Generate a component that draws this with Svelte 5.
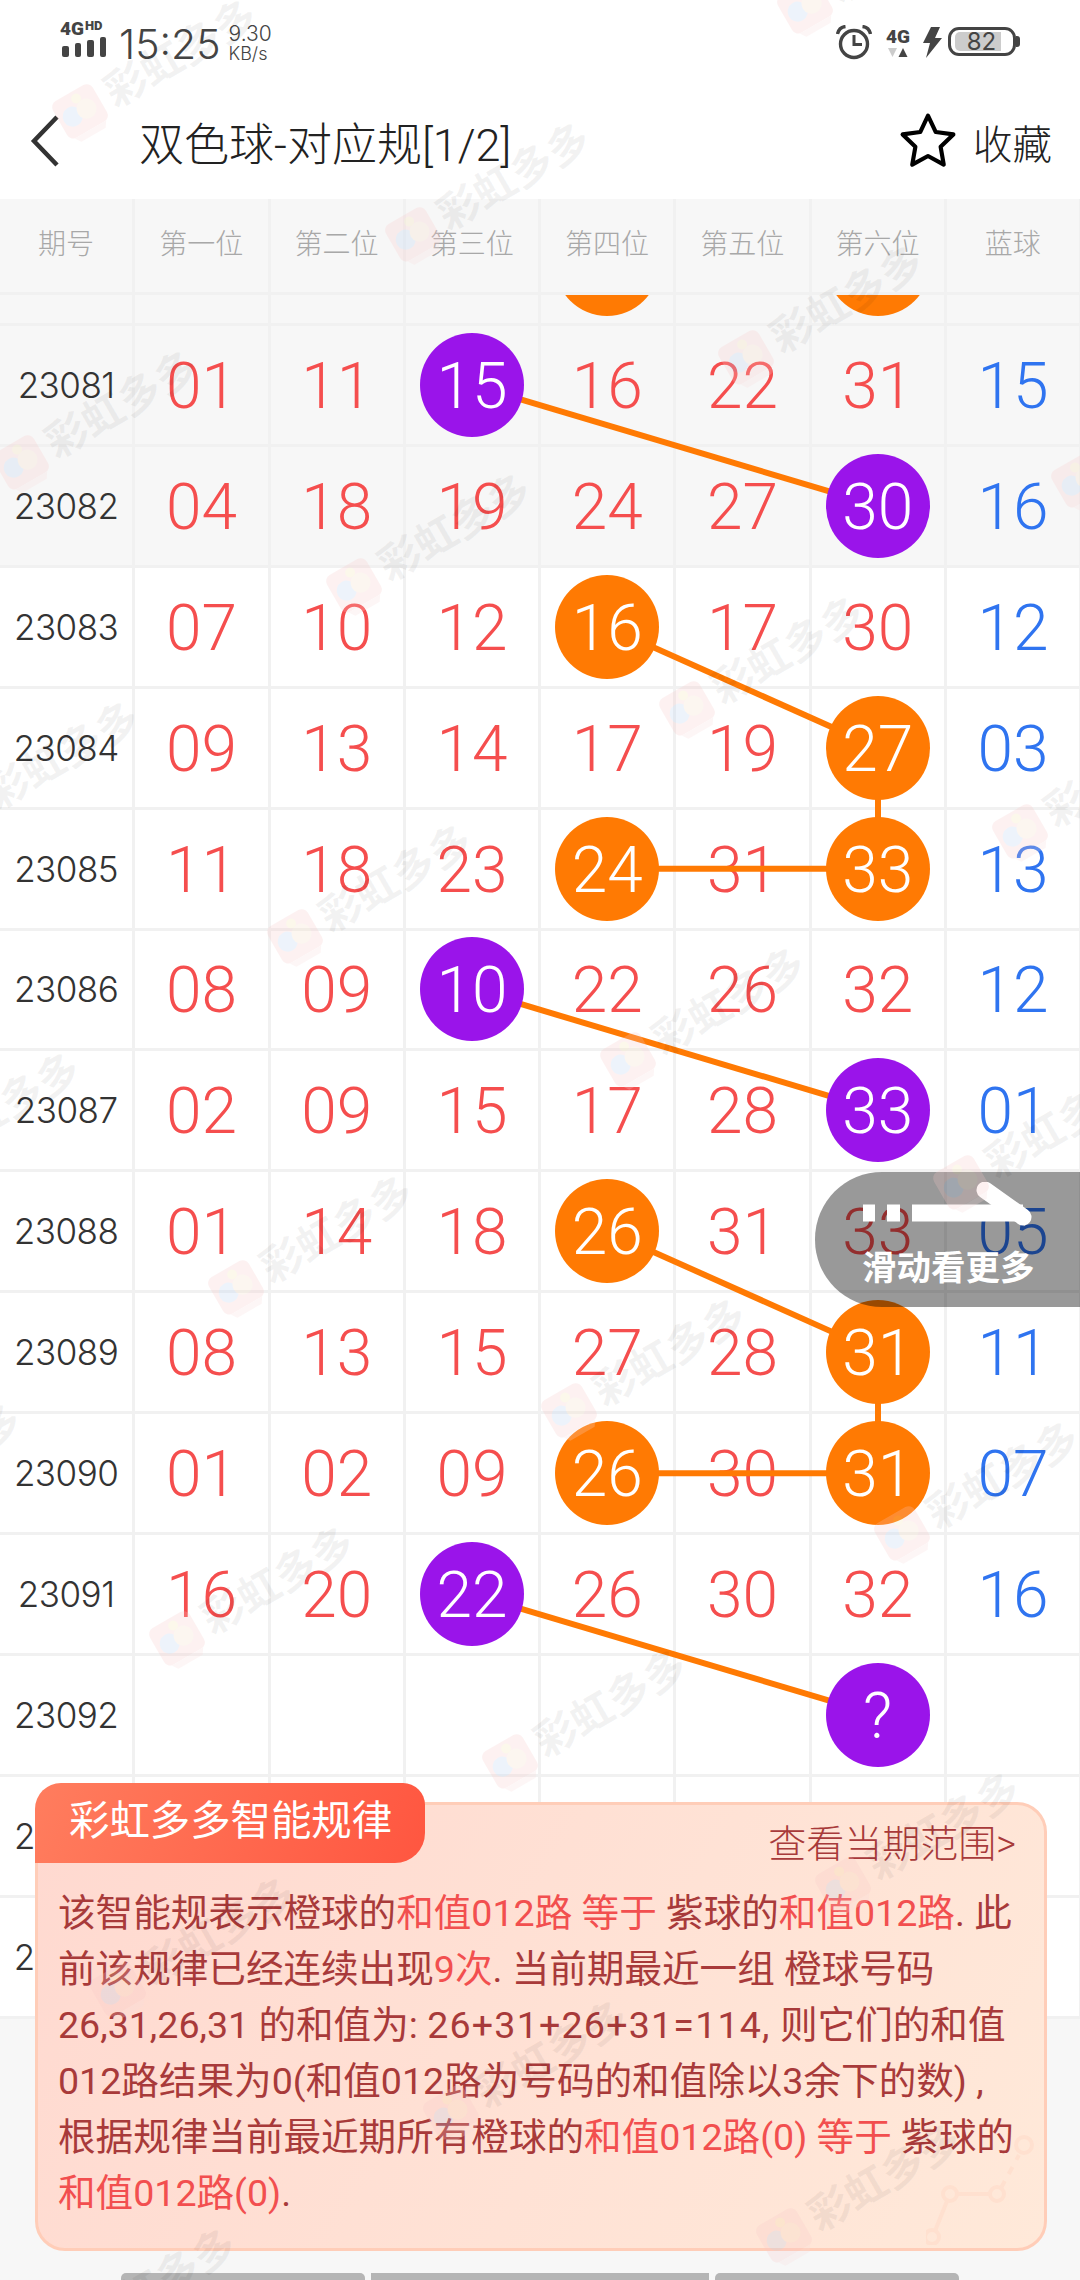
<script>
  const heads = ['期号', '第一位', '第二位', '第三位', '第四位', '第五位', '第六位', '蓝球'];
  const P = 'p', O = 'o';
  // each cell: text, or [text, ball colour]
  const rows = [
    ['', '', '', '', ['', O], '', ['', O], ''],
    ['23081', '01', '11', ['15', P], '16', '22', '31', '15'],
    ['23082', '04', '18', '19', '24', '27', ['30', P], '16'],
    ['23083', '07', '10', '12', ['16', O], '17', '30', '12'],
    ['23084', '09', '13', '14', '17', '19', ['27', O], '03'],
    ['23085', '11', '18', '23', ['24', O], '31', ['33', O], '13'],
    ['23086', '08', '09', ['10', P], '22', '26', '32', '12'],
    ['23087', '02', '09', '15', '17', '28', ['33', P], '01'],
    ['23088', '01', '14', '18', ['26', O], '31', '33', '05'],
    ['23089', '08', '13', '15', '27', '28', ['31', O], '11'],
    ['23090', '01', '02', '09', ['26', O], '30', ['31', O], '07'],
    ['23091', '16', '20', ['22', P], '26', '30', '32', '16'],
    ['23092', '', '', '', '', '', ['?', P], ''],
    ['23093', '', '', '', '', '', '', ''],
    ['23094', '', '', '', '', '', '', '']
  ];
  const ROW = 120.93, COL = 135.25;
  const cx = (c) => c * COL + 66.5;
  const cy = (r) => r * ROW + 59;
  const links = [
    [1, 3, 2, 6], [3, 4, 4, 6], [4, 6, 5, 6], [5, 4, 5, 6], [6, 3, 7, 6],
    [8, 4, 9, 6], [9, 6, 10, 6], [10, 4, 10, 6], [11, 3, 12, 6]
  ];
  const marks = [];
  for (let j = -1; j < 8; j++) {
    for (let i = -3; i < 6; i++) {
      const x = 81 + i * 333 - j * 59;
      const y = 113 + i * 123 + j * 351;
      if (x > -240 && x < 1100 && y > -60 && y < 2360) marks.push({ x, y });
    }
  }
</script>

<div class="page">
  <header class="status">
    <div class="side">
      <div class="signal">
        <div class="net"><b class="g4">4G</b><b class="hd">HD</b></div>
        <div class="bars"><i class="b1"></i><i class="b2"></i><i class="b3"></i><i class="b4"></i></div>
      </div>
      <span class="time">15:25</span>
      <div class="speed"><span class="sp1">9.30</span><span class="sp2">KB/s</span></div>
    </div>
    <div class="side right">
      <svg class="alarm" width="36" height="35" viewBox="0 0 36 35" fill="none" stroke="#444">
        <circle cx="18" cy="19" r="13.5" stroke-width="3.4" />
        <path d="M18 10v9.5h8" stroke-width="3" />
        <path d="M1.5 9C2.5 4.5 5 2 9.5 1.5M34.500 9C33.500 4.500 31 2 26.500 1.500" stroke-width="3.4" />
      </svg>
      <div class="net4">
        <b>4G</b>
        <svg width="20" height="10" viewBox="0 0 20 10"><path d="M0 0h9l-4.500 9z" fill="#ccc" /><path d="M10.500 9h9l-4.500-9z" fill="#444" /></svg>
      </div>
      <svg class="bolt" width="19" height="31" viewBox="0 0 19 31"><path d="M8 0h9l-5 11h7L3 31l4-15H0z" fill="#444" /></svg>
      <div class="battery"><div class="level"></div><span>82</span></div>
      <i class="nub"></i>
    </div>
  </header>

  <nav class="nav">
    <svg class="back" width="30" height="52" viewBox="0 0 30 52" fill="none"><path d="M27 2L4 26l23 24" stroke="#333" stroke-width="4.500" /></svg>
    <h1>双色球-对应规[1/2]</h1>
    <svg class="star" width="58" height="56" viewBox="0 0 56 54" fill="none"><path d="M28 3.500l7.500 15.800 17 2.300-12.300 12 3 17.200L28 42.500l-15.200 8.300 3-17.200-12.300-12 17-2.300z" stroke="#000" stroke-width="4" stroke-linejoin="round" /></svg>
    <span class="fav">收藏</span>
  </nav>

  <div class="thead">
    {#each heads as h}
      <div class="th">{h}</div>
    {/each}
  </div>

  <main class="body">
    <div class="inner">
      {#each rows as row, r}
        <div class="row" class:shade={r < 3}>
          {#each row as cell, c}
            <div class="cell" class:period={c === 0} class:blue={c === 7}>
              {#if Array.isArray(cell)}
                <span class="ball {cell[1]}">{cell[0]}</span>
              {:else}
                {cell}
              {/if}
            </div>
          {/each}
        </div>
      {/each}
      <svg class="links" width="1082" height="1815">
        {#each links as l}
          <line x1={cx(l[1])} y1={cy(l[0])} x2={cx(l[3])} y2={cy(l[2])} stroke="#ff7a03" stroke-width="6" />
        {/each}
      </svg>
    </div>
  </main>

  <aside class="hint">
    <svg class="arrow" width="180" height="60" viewBox="0 0 180 60">
      <path d="M0 31h12M24 31h13M49 31h111" stroke="#fff" stroke-width="17" fill="none" />
      <path d="M122 8l38 27" stroke="#fff" stroke-width="17" stroke-linecap="round" fill="none" />
    </svg>
    <span>滑动看更多</span>
  </aside>

  <section class="panel">
    <div class="tag">彩虹多多智能规律</div>
    <svg class="deco" width="110" height="110" viewBox="0 0 110 110" fill="none" stroke="#ffe0cf" stroke-width="4">
      <circle cx="98" cy="10" r="8" /><circle cx="71" cy="59" r="7" /><circle cx="24" cy="59" r="7" /><circle cx="6" cy="102" r="7" />
      <path d="M31 59h33M21 66l-12 30" /><path d="M75 53l18-33" stroke-dasharray="8 8" />
    </svg>
    <div class="link">查看当期范围&gt;</div>
    <p class="text">该智能规表示橙球的<em>和值012路 等于</em> 紫球的<em>和值012路</em>. 此<br />前该规律已经连续出现<em>9次</em>. 当前期最近一组 橙球号码<br />26,31,26,31 的和值为: <span class="sum">26+31+26+31=114,</span> 则它们的和值<br />012路结果为0(和值012路为号码的和值除以3余下的数) ,<br />根据规律当前最近期所有橙球的<em>和值012路(0) 等于</em> 紫球的<br /><em>和值012路(0)</em>.</p>
  </section>

  <div class="tabs"><i class="t1"></i><i class="t2"></i><i class="t3"></i></div>

  <div class="marks">
    {#each marks as m}
      <div class="mark" style="left:{m.x}px;top:{m.y}px">
        <svg width="52" height="52" viewBox="0 0 52 52">
          <rect x="3" y="3" width="46" height="42" rx="7" fill="#f9c9c9" />
          <path d="M8 45h36l-4 6H12z" fill="#fbdcdc" />
          <circle cx="17" cy="25" r="10" fill="#b9d2f2" />
          <circle cx="33" cy="25" r="10" fill="#f7dfc4" />
          <circle cx="29" cy="11" r="5" fill="#f7e3b0" />
        </svg>
        <span>彩虹多多</span>
      </div>
    {/each}
  </div>
</div>

<style>
  :global(body) { margin: 0; background: #fff; }
  .page {
    position: relative;
    width: 1080px;
    height: 2280px;
    overflow: hidden;
    background: #fff;
    font-family: Inter, "Noto Sans CJK SC", sans-serif;
    font-weight: 300;
    color: #333;
  }

  /* status bar */
  .status {
    height: 83px;
    padding: 20px 60px 0 60px;
    box-sizing: border-box;
    display: flex;
    justify-content: space-between;
    align-items: flex-start;
    color: #444;
  }
  .side { display: flex; align-items: flex-start; }
  .signal { width: 46px; margin-right: 13px; }
  .net { display: flex; align-items: flex-start; height: 17px; font-family: Roboto, sans-serif; font-weight: 700; line-height: 17px; }
  .g4 { font-size: 19px; }
  .hd { font-size: 13px; line-height: 12px; margin-left: 1px; }
  .bars { display: flex; align-items: flex-end; gap: 6px; height: 20px; margin-left: 2px; }
  .bars i { width: 7px; background: #444; border-radius: 2px; }
  .b1 { height: 11px; } .b2 { height: 14px; } .b3 { height: 17px; } .b4 { height: 20px; }
  .time { font-size: 41px; line-height: 48px; margin-right: 8px; }
  .speed { display: flex; flex-direction: column; margin-top: 4px; }
  .sp1 { font-size: 21px; line-height: 20px; }
  .sp2 { font-size: 18px; line-height: 19px; }
  .right { position: relative; padding-right: 4px; }
  .alarm { margin-top: 5px; margin-left: -1px; }
  .net4 { display: flex; flex-direction: column; align-items: center; width: 24px; margin: 8px 13px 0 14px; font-family: Roboto, sans-serif; font-weight: 700; font-size: 19px; line-height: 17px; }
  .net4 svg { margin-top: 3px; }
  .bolt { margin-top: 7px; margin-right: 6px; }
  .battery {
    position: relative;
    width: 68px;
    height: 29px;
    margin-top: 7px;
    border: 3px solid #444;
    border-radius: 11px;
    box-sizing: border-box;
    font-size: 24px;
    font-weight: 400;
    line-height: 23px;
    text-align: center;
  }
  .battery span { position: relative; margin-left: -1px; }
  .level { position: absolute; left: 4px; top: 2px; width: 46px; height: 19px; background: #ccc; border-radius: 5px 0 0 5px; }
  .nub { position: absolute; right: 0; top: 16px; width: 4px; height: 11px; background: #444; border-radius: 0 3px 3px 0; }

  /* navigation */
  .nav { height: 116px; display: flex; align-items: center; padding: 0 28px 0 30px; }
  .back { flex: none; margin-right: 79px; }
  h1 { flex: 1; margin: 0; font-family: Roboto, "Noto Sans CJK SC", sans-serif; font-size: 45px; font-weight: 300; color: #222; white-space: nowrap; }
  .star { flex: none; margin-right: 16px; margin-top: -2px; }
  .fav { font-size: 39.500px; color: #222; }

  /* table */
  .thead {
    display: grid;
    grid-template-columns: repeat(8, 135.250px);
    width: 1082px;
    height: 96px;
    background: #f7f7f7;
    border-bottom: 3px solid #f1f1f1;
    box-sizing: border-box;
  }
  .th {
    border-right: 3px solid #f1f1f1;
    font-size: 28px;
    line-height: 90px;
    color: #a8a8a8;
    text-align: center;
  }
  .body { height: 1985px; overflow: hidden; background: #f7f7f7; }
  .inner { position: relative; width: 1082px; margin-top: -90px; }
  .row {
    display: grid;
    grid-template-columns: repeat(8, 135.250px);
    height: 120.930px;
    box-sizing: border-box;
    background: #fff;
    border-bottom: 3px solid #f1f1f1;
  }
  .shade { background: #f7f7f7; }
  .cell {
    display: flex;
    align-items: center;
    justify-content: center;
    padding-top: 3px;
    border-right: 3px solid #f1f1f1;
    font-family: Roboto, sans-serif;
    font-size: 64px;
    color: #f54e4e;
  }
  .period { padding-top: 0; font-family: Inter, sans-serif; font-size: 35px; letter-spacing: -.5px; color: #333; font-weight: 300; }
  .blue { color: #2f74f0; }
  .ball {
    position: relative;
    z-index: 2;
    width: 104px;
    height: 104px;
    box-sizing: border-box;
    margin-top: -3px;
    padding-top: 3px;
    flex: none;
    border-radius: 50%;
    display: flex;
    align-items: center;
    justify-content: center;
    color: #fff;
  }
  .p { background: #9a14ea; }
  .o { background: #ff7a03; }
  .links { position: absolute; left: 0; top: 0; z-index: 1; pointer-events: none; }

  /* swipe hint */
  .hint {
    position: absolute;
    left: 815px;
    top: 1172px;
    z-index: 5;
    width: 265px;
    height: 135px;
    background: rgba(0, 0, 0, .4);
    border-radius: 67px 0 0 67px;
    color: #fff;
  }
  .arrow { position: absolute; left: 48px; top: 10px; }
  .hint span { position: absolute; left: 47px; top: 73px; font-size: 34.500px; font-weight: 700; line-height: 46px; white-space: nowrap; }

  /* rule panel */
  .panel {
    position: absolute;
    left: 35px;
    top: 1802px;
    z-index: 6;
    width: 1012px;
    height: 449px;
    box-sizing: border-box;
    padding: 0 28px 0 20px;
    border: 3px solid #ffcdb8;
    border-radius: 30px;
    background: linear-gradient(120deg, #ffd9d0, #ffe9d9);
    font-family: Roboto, "Noto Sans CJK SC", sans-serif;
  }
  .tag {
    position: absolute;
    left: -3px;
    top: -22px;
    width: 390px;
    height: 80px;
    box-sizing: border-box;
    padding-left: 34px;
    border-radius: 26px 22px 30px 0;
    background: linear-gradient(110deg, #ff7d5e, #ff5640);
    color: #fff;
    font-size: 40.400px;
    font-weight: 400;
    line-height: 78px;
    white-space: nowrap;
  }
  .deco { position: absolute; right: 8px; bottom: 3px; }
  .link { position: relative; margin-top: 20px; font-size: 38px; line-height: 38px; text-align: right; color: #a83a3a; }
  .text { position: relative; margin: 22px 0 0; font-size: 37.600px; font-weight: 400; line-height: 56px; color: #a83a3a; white-space: nowrap; }
  .sum { letter-spacing: 1.200px; }
  em { font-style: normal; color: #f24f4f; }

  .tabs { position: absolute; left: 121px; top: 2273px; z-index: 6; display: flex; gap: 6px; }
  .tabs i { height: 7px; background: #b5b5b5; }
  .t1 { width: 244px; border-radius: 5px 5px 0 0; }
  .t2 { width: 338px; }
  .t3 { width: 244px; border-radius: 5px 5px 0 0; }

  /* watermark */
  .marks { position: absolute; inset: 0; z-index: 9; pointer-events: none; overflow: hidden; }
  .mark {
    position: absolute;
    width: 0;
    height: 0;
    transform: rotate(-30deg);
    opacity: .4;
  }
  .mark svg { position: absolute; left: -26px; top: -26px; opacity: .6; }
  .mark span {
    position: absolute;
    left: 32px;
    top: -30px;
    font-size: 42px;
    line-height: 56px;
    font-weight: 700;
    color: rgba(0, 0, 0, .13);
    white-space: nowrap;
  }
</style>
